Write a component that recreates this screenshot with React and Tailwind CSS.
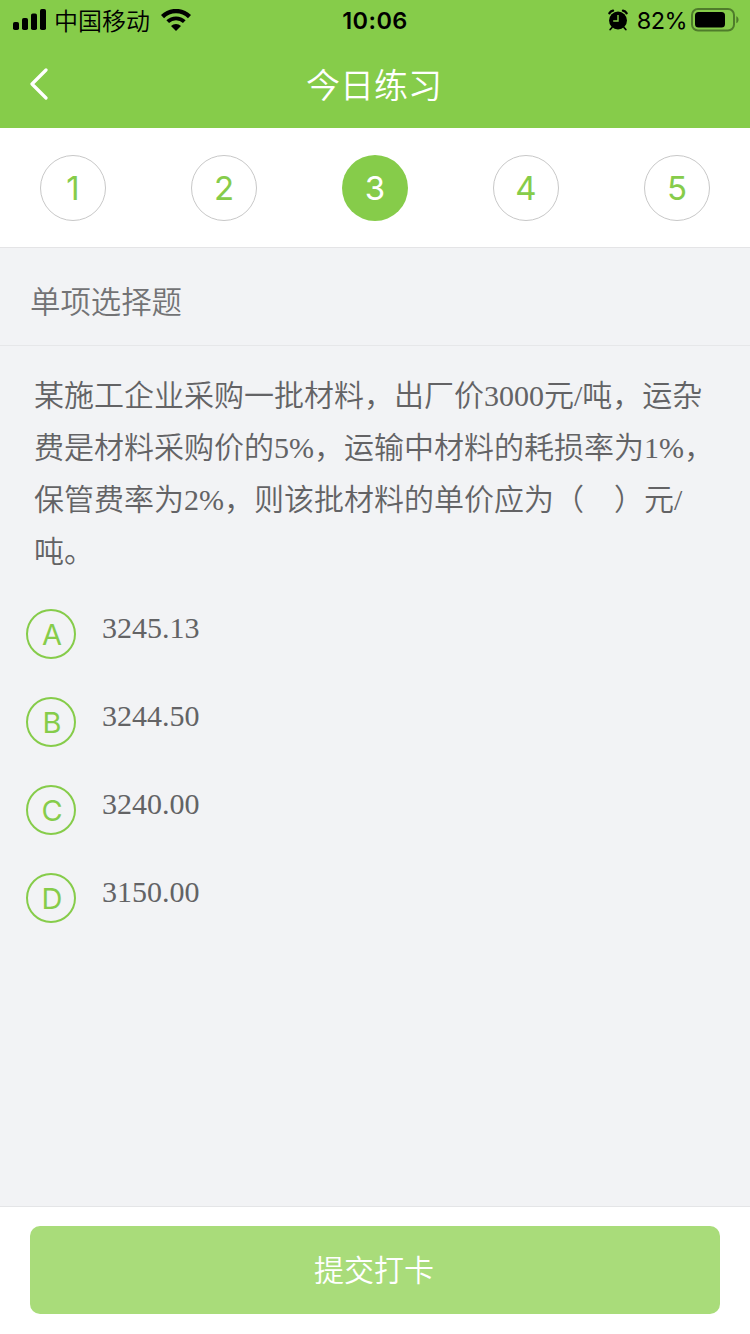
import React, { useState } from 'react';

const steps = [1, 2, 3, 4, 5];

const questionLines = [
  '某施工企业采购一批材料，出厂价3000元/吨，运杂',
  '费是材料采购价的5%，运输中材料的耗损率为1%，',
  '保管费率为2%，则该批材料的单价应为（　）元/',
  '吨。',
];

const options = [
  { key: 'A', text: '3245.13' },
  { key: 'B', text: '3244.50' },
  { key: 'C', text: '3240.00' },
  { key: 'D', text: '3150.00' },
];

function StatusBar() {
  return (
    <div className="grid h-10 grid-cols-3 items-center text-black">
      <div className="flex items-center pl-[13px]">
        <svg width="33" height="22" viewBox="0 0 33 22" fill="currentColor">
          <rect x="0" y="13" width="6" height="8" rx="1.8" />
          <rect x="9" y="9" width="6" height="12" rx="1.8" />
          <rect x="18" y="4.5" width="6" height="16.5" rx="1.8" />
          <rect x="27" y="0" width="6" height="21" rx="1.8" />
        </svg>
        <span className="ml-2 pt-[3px] text-[24px] font-[350] leading-[37px] whitespace-nowrap">中国移动</span>
        <svg className="ml-[11px]" width="30" height="22" viewBox="0 0 30 22" fill="none" stroke="currentColor">
          <path d="M1.5 7.6a19.2 19.2 0 0 1 27 0" strokeWidth="4.4" />
          <path d="M6.7 12.7a11.8 11.8 0 0 1 16.6 0" strokeWidth="3.8" />
          <path d="M15 22l-5-5a7.2 7.2 0 0 1 10 0z" fill="currentColor" stroke="none" />
        </svg>
      </div>
      <div className="pt-0.5 text-center text-[23.5px] font-semibold tracking-[0.4px]">10:06</div>
      <div className="flex items-center justify-end pr-[11px]">
        <svg width="20" height="22" viewBox="0 0 20 22" fill="none" stroke="currentColor">
          <circle cx="10" cy="11.5" r="9" fill="currentColor" stroke="none" />
          <path d="M1.4 4.2Q2.6 2 5 1.6M18.6 4.2Q17.4 2 15 1.6" strokeWidth="2.4" strokeLinecap="round" />
          <path d="M4 18.5l-1.8 2M16 18.5l1.8 2" strokeWidth="1.8" strokeLinecap="round" />
          <path d="M10 6v6H5.2" stroke="#86cc4a" strokeWidth="1.4" />
        </svg>
        <span className="ml-[9px] pt-0.5 text-[23.5px] tracking-[-0.6px]">82%</span>
        <svg className="ml-1" width="48" height="24" viewBox="0 0 48 24">
          <rect x="1" y="1" width="42" height="21.5" rx="6" fill="none" stroke="#4f7c2b" strokeWidth="2" />
          <rect x="4" y="4" width="30" height="15.5" rx="3.5" fill="#000" />
          <path d="M45.3 8.3c3 1.2 3 5.8 0 7z" fill="#4f7c2b" />
        </svg>
      </div>
    </div>
  );
}

export default function App() {
  const [current, setCurrent] = useState(3);

  return (
    <div className="flex h-[1334px] w-[750px] flex-col overflow-hidden bg-[#f2f3f5] font-['Inter','Noto_Sans_CJK_SC',sans-serif]">
      {/* Header */}
      <header className="h-32 shrink-0 bg-[#86cc4a]">
        <StatusBar />
        <div className="grid h-[88px] grid-cols-3 items-center text-white">
          <button className="pl-[29px]">
            <svg width="20" height="32" viewBox="0 0 20 32" fill="none" stroke="currentColor" strokeWidth="3.2" strokeLinecap="round" strokeLinejoin="round">
              <path d="M17 2 3 16l14 14" />
            </svg>
          </button>
          <h1 className="pt-0.5 pr-0.5 text-center text-[34px] font-[350]">今日练习</h1>
        </div>
      </header>

      {/* Steps */}
      <nav className="flex h-[120px] shrink-0 items-center justify-between border-b border-[#e4e4e6] bg-white px-10">
        {steps.map((n) => (
          <button
            key={n}
            onClick={() => setCurrent(n)}
            className={`flex size-[66px] items-center justify-center rounded-full pt-0.5 text-[33px] ${
              n === current ? 'bg-[#86cc4a] text-white' : 'border border-[#c8c8c8] text-[#86cc4a]'
            }`}
          >
            {n}
          </button>
        ))}
      </nav>

      <div className="flex h-[98px] shrink-0 items-center border-b border-[#e6e7e9] pl-[30px] pt-3 text-[30.4px] font-[350] text-[#737375]">
        单项选择题
      </div>

      {/* Question */}
      <main className="flex-1 font-['Liberation_Serif','Noto_Sans_CJK_SC',serif] text-[30px] text-[#636365]">
        <div className="pl-[34px] pt-6 font-[350] leading-[52px]">
          {questionLines.map((line) => (
            <p key={line} className="whitespace-nowrap">{line}</p>
          ))}
        </div>
        <ul className="mt-[31px] flex flex-col gap-[38px] pl-[26px]">
          {options.map((opt) => (
            <li key={opt.key} className="flex h-[50px] items-start">
              <span className="flex size-[50px] items-center justify-center rounded-full border-2 border-[#86cc4a] pl-0.5 pt-0.5 font-['Inter',sans-serif] text-[29px] text-[#86cc4a]">
                {opt.key}
              </span>
              <span className="ml-[26px] leading-[38px]">{opt.text}</span>
            </li>
          ))}
        </ul>
      </main>

      {/* Submit */}
      <footer className="h-32 shrink-0 border-t border-[#e4e5e7] bg-white px-[30px] pt-[19px]">
        <button className="h-[88px] w-full rounded-[10px] bg-[#a9dc7a] pr-0.5 text-[30px] font-[350] text-white">
          提交打卡
        </button>
      </footer>
    </div>
  );
}
